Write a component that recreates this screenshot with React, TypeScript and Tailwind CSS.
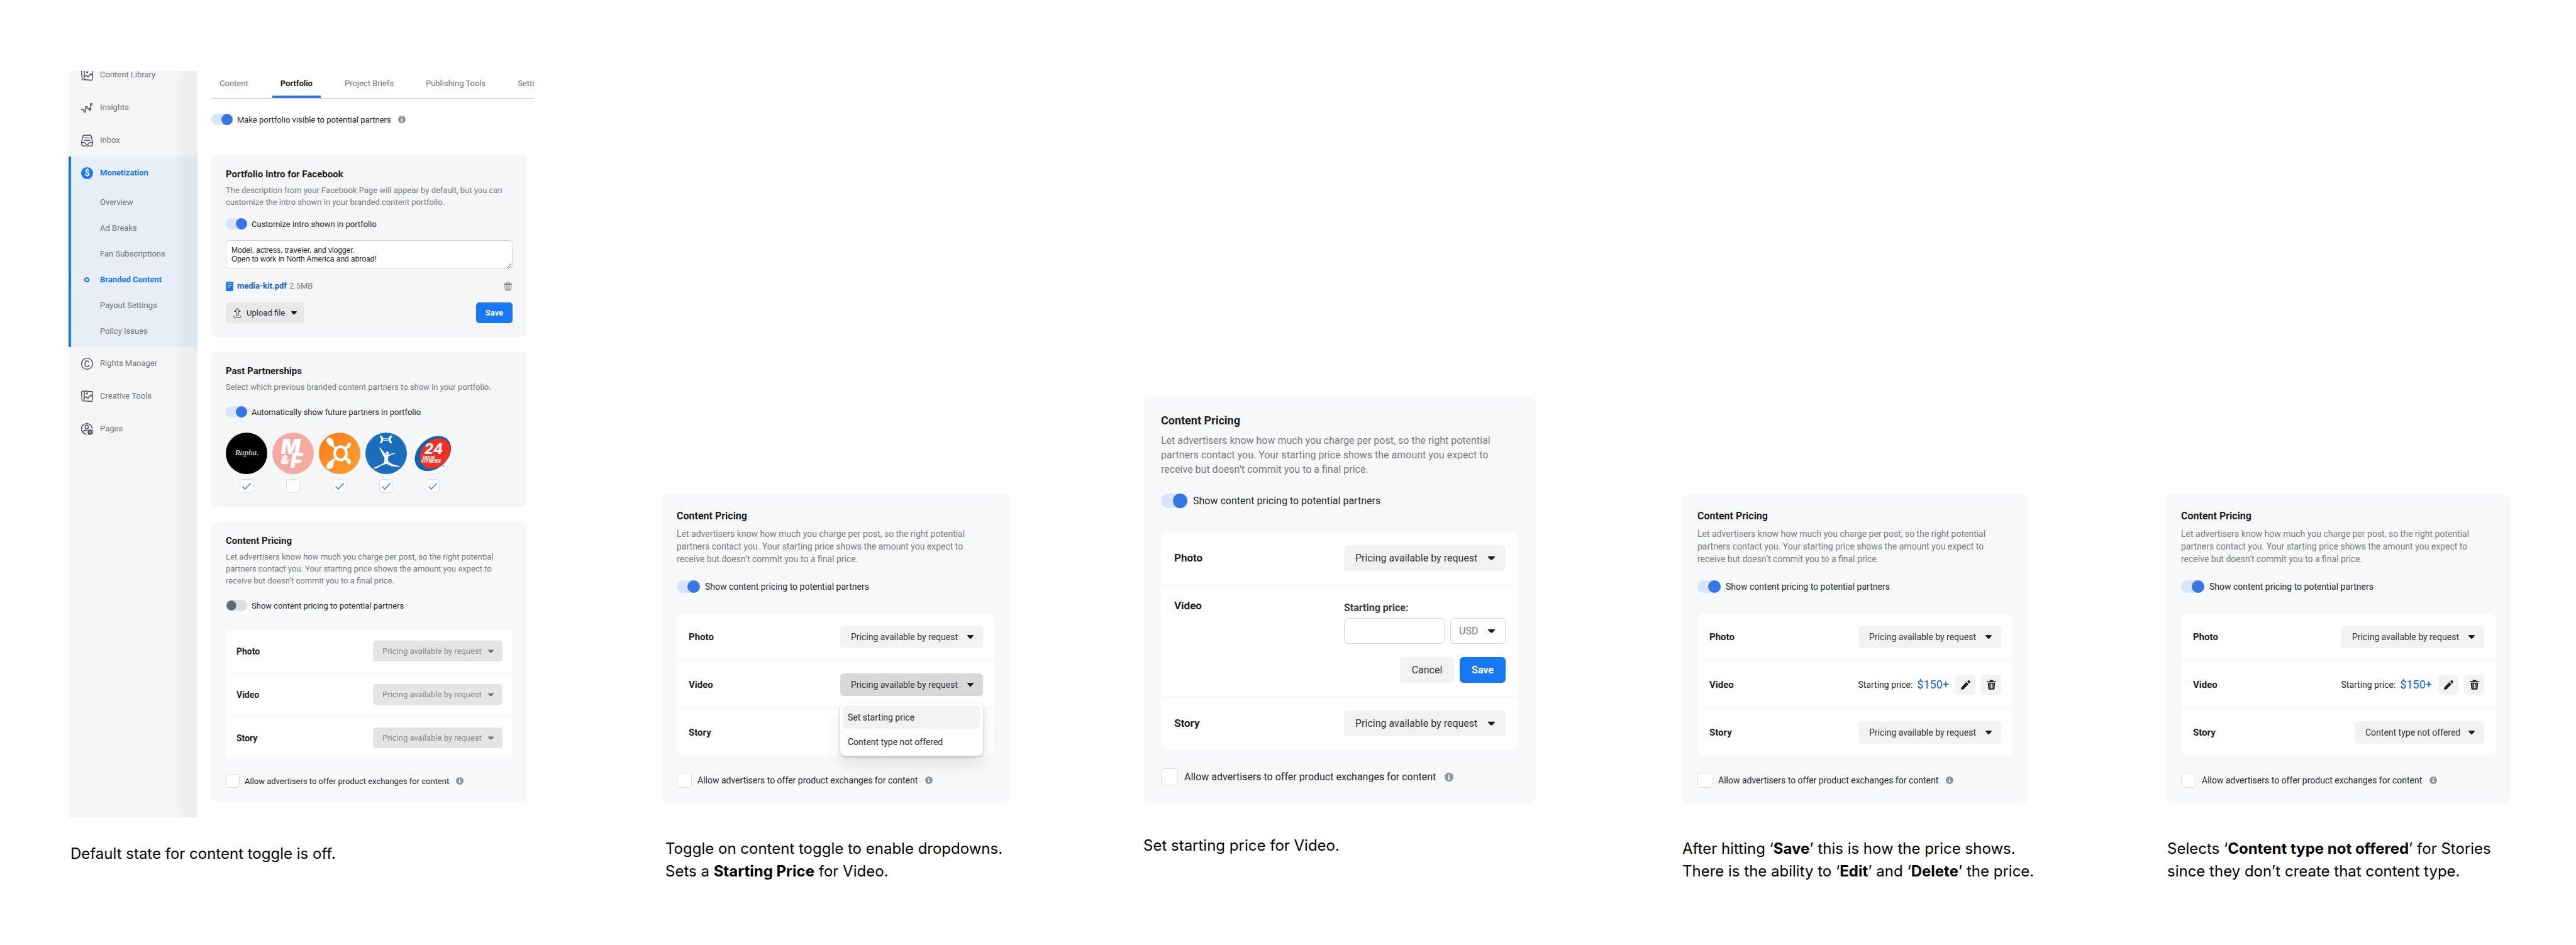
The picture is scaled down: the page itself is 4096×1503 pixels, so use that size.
import React, { useId } from "react";

type Size = "sm" | "md" | "lg";

const scale = {
  sm: {
    card: "px-[23px] pt-[21px] pb-[22px] rounded-lg",
    heading: "text-[15px] leading-5",
    body: "text-[13px]",
    desc: "text-[13px] leading-[19px] mt-1.5",
    toggleRow: "mt-[21px] gap-[7px]",
    track: "w-[34px] h-[18px] before:size-[18px]",
    list: "mt-[30px]",
    row: "min-h-[67px] pl-[17px] pr-4",
    label: "text-sm",
    control: "h-[33px] rounded-[5px] text-[13px] pl-[15px] pr-8",
    controlWidth: "w-[206px]",
    caret: "right-3.5 w-[9px]",
    checkRow: "mt-6 gap-2",
    check: "size-[22px] rounded-[5px]",
    info: "size-3 ml-[3px]",
  },
  md: {
    card: "px-6 pt-[23px] pb-6 rounded-lg",
    heading: "text-base leading-[22px]",
    body: "text-sm",
    desc: "text-sm leading-5 mt-[7px]",
    toggleRow: "mt-6 gap-2",
    track: "w-[37px] h-5 before:size-5",
    list: "mt-[33px]",
    row: "min-h-[74px] pl-[19px] pr-[18px]",
    label: "text-[15px]",
    control: "h-9 rounded-md text-sm pl-[17px] pr-9",
    controlWidth: "w-[227px]",
    caret: "right-[15px] w-2.5",
    checkRow: "mt-[27px] gap-[9px]",
    check: "size-6 rounded-md",
    info: "size-3 ml-[3px]",
  },
  lg: {
    card: "px-7 pt-[26px] pb-7 rounded-[9px]",
    heading: "text-lg leading-6",
    body: "text-base",
    desc: "text-base leading-[23px] mt-2",
    toggleRow: "mt-[27px] gap-[9px]",
    track: "w-[42px] h-[23px] before:size-[23px]",
    list: "mt-[38px]",
    row: "min-h-[83px] pl-[21px] pr-5",
    label: "text-[17px]",
    control: "h-[41px] rounded-md text-base pl-[18px] pr-10",
    controlWidth: "w-[257px]",
    caret: "right-[17px] w-[11px]",
    checkRow: "mt-[30px] gap-2.5",
    check: "size-[27px] rounded-md",
    info: "size-3.5 ml-1",
  },
};

/* ---------- icons ---------- */

function Caret({ className = "" }: { className?: string }) {
  return (
    <svg viewBox="0 0 13 8" className={className} fill="currentColor" aria-hidden="true">
      <path d="M1.4 0h10.2c1.3 0 1.8 1.300.9 2.200L8 7.100c-.9.9-2.100.9-3 0L.5 2.200C-.4 1.300.1 0 1.400 0z" />
    </svg>
  );
}

function Info({ className = "" }: { className?: string }) {
  return (
    <svg viewBox="0 0 18 18" className={className} role="img" aria-label="More information">
      <circle cx="9" cy="9" r="9" fill="#8d949e" />
      <circle cx="9" cy="4.900" r="1.500" fill="#fff" />
      <path d="M6.800 7.500h3.400v4.700h1.200v1.800H6.600v-1.800h1.200V9.300h-1z" fill="#fff" />
    </svg>
  );
}

function NavSvg({ children }: { children: React.ReactNode }) {
  return (
    <svg
      viewBox="0 0 28 28"
      className="size-[19px]"
      fill="none"
      stroke="#444950"
      strokeWidth="2"
      strokeLinecap="round"
      strokeLinejoin="round"
      aria-hidden="true"
    >
      {children}
    </svg>
  );
}

const PicturesIcon = () => (
  <NavSvg>
    <path d="M9.700 1.500l15.500 1.100c1.300.1 2 .9 1.900 2.100L26 24c-.1 1.300-.9 1.900-2.100 1.800L8.600 24.700c-1.200-.1-1.900-.9-1.800-2.100l.9-19.200c.1-1.200.9-2 2-1.900z" />
    <path d="M5.500 1.500L2.500 2C1.400 2.200.8 2.900.9 4l1.300 18.500c.1 1.600.8 2.700 2.500 3.100" />
    <path d="M7.500 18l3.700-4 3 2.700 1.300 2 7-8 3.800 4" />
    <circle cx="14" cy="7" r="1.300" fill="#444950" />
  </NavSvg>
);

const InsightsIcon = () => (
  <NavSvg>
    <path d="M.8 18.600c2-2 3.700-2 5.700 1.600M9.200 19.800l2.200-4.900M14.500 14l4.200 2.300M21.600 15l1.600-7" />
    <circle cx="8.300" cy="22" r="2.200" />
    <circle cx="12.300" cy="12.700" r="2.200" />
    <circle cx="21" cy="17.300" r="2.200" />
    <circle cx="23.700" cy="5.700" r="2.200" />
  </NavSvg>
);

const InboxIcon = () => (
  <NavSvg>
    <path d="M7.500 1.500h13c1.700 0 2.700.7 3.100 2.300L27 18v4c0 3-1.700 4.800-4.700 4.800H5.700C2.700 26.800 1 25 1 22v-4L4.400 3.800C4.800 2.200 5.800 1.500 7.500 1.500z" />
    <path d="M8 8h12M7 13.500h14M1.200 18.500h6c1.300 0 1.800.6 2.300 1.800.8 1.800 2.300 2.900 4.500 2.900s3.700-1.100 4.500-2.900c.5-1.200 1-1.800 2.300-1.800h6" />
  </NavSvg>
);

const RightsIcon = () => (
  <NavSvg>
    <circle cx="14" cy="14" r="13" />
    <path d="M18.300 10.500C17.500 8.500 16 7.300 14 7.300c-3.100 0-5 2.600-5 6.700s1.900 6.700 5 6.700c2 0 3.500-1.200 4.300-3.200" />
  </NavSvg>
);

const PagesIcon = () => (
  <NavSvg>
    <path d="M12.500 25.900A12.500 12.500 0 1 1 25.600 12" />
    <ellipse cx="13" cy="9.200" rx="3.900" ry="4.500" />
    <path d="M13.500 17H10c-3 0-5 1.800-5 4.600" />
    <circle cx="21.300" cy="21" r="3.400" strokeWidth="3" />
    <path d="M21.300 14.500v2M21.300 25.500v2M14.800 21h2M25.800 21h2M16.700 16.400l1.400 1.400M24.500 24.200l1.400 1.400M16.700 25.600l1.400-1.400M24.500 17.800l1.400-1.400" strokeWidth="2.400" />
  </NavSvg>
);

const MoneyIcon = () => (
  <span className="flex size-[19px] items-center justify-center rounded-full bg-[#1877f2] text-sm leading-none font-bold text-white" aria-hidden="true">
    $
  </span>
);

const PencilIcon = () => (
  <svg viewBox="0 0 22 22" className="size-[15px]" fill="#1c1e21" aria-hidden="true">
    <path d="M.3 20.500l.6-3.700c.1-.5.2-.8.6-1.200L13 4.200 17.800 9 6.400 20.500c-.4.4-.7.500-1.200.6l-3.700.7c-.8.100-1.300-.4-1.200-1.300zM14.600 2.700L16.700.7c1-.9 2.100-.9 3 0l1.600 1.600c.9.9.9 2 0 3l-2 2.100z" />
  </svg>
);

const TrashSolidIcon = () => (
  <svg viewBox="0 0 22 24" className="h-4 w-[15px]" aria-hidden="true">
    <path d="M1 3.400h5.200C6.800 1.300 8.500.4 11 .4s4.200.9 4.800 3H21c1.300 0 1.300 2.200 0 2.200H1c-1.300 0-1.300-2.200 0-2.200z" fill="#1c1e21" />
    <path d="M2.200 7.200h17.600l-1.500 14.300c-.2 1.600-1 2.300-2.500 2.300H6.200c-1.500 0-2.300-.7-2.500-2.300z" fill="#1c1e21" />
    <path d="M7.100 10l.6 10.500M11 10v10.500M14.900 10l-.6 10.500" stroke="#f2f2f2" strokeWidth="1.500" strokeLinecap="round" />
  </svg>
);

const TrashOutlineIcon = () => (
  <svg viewBox="0 0 21 23" className="h-[15px] w-3.5" fill="none" stroke="#6b6e73" strokeWidth="1.400" strokeLinecap="round" aria-hidden="true">
    <path d="M1 4.500h19M6.500 4c.3-2 1.500-3 4-3s3.700 1 4 3" />
    <path d="M2.500 7h16l-1.300 13.500c-.1 1-.8 1.600-1.700 1.600h-10c-.9 0-1.600-.6-1.700-1.600z" />
    <path d="M7 9.500l.5 10M10.500 9.500v10M14 9.500l-.5 10" />
  </svg>
);

const DocIcon = () => (
  <svg viewBox="0 0 17 22" className="h-[15px] w-3" aria-hidden="true">
    <rect width="17" height="22" rx="2" fill="#1877f2" />
    <path d="M4 5h9.500M4 9h9.500M4 13h6" stroke="#fff" strokeWidth="1.300" />
  </svg>
);

const UploadIcon = () => (
  <svg viewBox="0 0 18 22" className="h-[15px] w-[13px]" fill="none" stroke="#3a3c40" strokeWidth="1.500" strokeLinecap="round" strokeLinejoin="round" aria-hidden="true">
    <path d="M9 1l6.500 7H12l-1 9.500H7L6 8H2.500z" />
    <path d="M.8 18.500v1.300c0 .9.500 1.400 1.400 1.400h13.600c.9 0 1.400-.5 1.400-1.400v-1.300" />
  </svg>
);

/* ---------- partner logos ---------- */

const RaphaLogo = () => (
  <svg viewBox="0 0 100 100" className="size-full">
    <circle cx="50" cy="50" r="50" fill="#000" />
    <text x="51" y="55" textAnchor="middle" fill="#fff" fontFamily="Liberation Serif, serif" fontStyle="italic" fontSize="20">Rapha.</text>
  </svg>
);

const MFLogo = () => (
  <svg viewBox="0 0 100 100" className="size-full">
    <circle cx="50" cy="50" r="50" fill="#f2aaa3" />
    <g fill="#fff" fontFamily="Inter, sans-serif" fontStyle="italic" fontWeight="900">
      <text x="21" y="52" fontSize="49">M</text>
      <text x="20" y="76" fontSize="29">&amp;</text>
      <text x="43" y="85" fontSize="50">F</text>
    </g>
  </svg>
);

const OrangeLogo = () => (
  <svg viewBox="0 0 100 100" className="size-full">
    <defs>
      <linearGradient id="orange-fill" x1="0" y1="0" x2="1" y2="1">
        <stop offset="0" stopColor="#f97a14" />
        <stop offset="1" stopColor="#fda035" />
      </linearGradient>
    </defs>
    <circle cx="50" cy="50" r="50" fill="url(#orange-fill)" />
    <g fill="#fff">
      <path d="M19 15c4-5 12-3 15 3 3 5 1 9 3 13 1 3 4 4 6 5l-4 5c-2-3-4-5-7-7-3-1-6-2-9-6-4-5-7-9-4-13z" />
      <path d="M19 86c4 4 12 2 15-4 3-5 1-9 3-13 1-3 4-4 6-5l-4-5c-2 3-4 5-7 7-3 1-6 2-9 6-4 5-7 10-4 14z" />
      <path d="M62 33c4 1 5-1 6-4 1-4 4-6 7-5 4 2 3 9-1 12-3 2-6 1-6 6z" />
      <path d="M62 67c4-1 5 1 6 4 1 4 4 6 7 5 4-2 3-9-1-12-3-2-6-1-6-6z" />
    </g>
    <ellipse cx="52.300" cy="50" rx="14.300" ry="16" fill="none" stroke="#fff" strokeWidth="6.500" />
  </svg>
);

const RunnerLogo = () => (
  <svg viewBox="0 0 100 100" className="size-full">
    <circle cx="50" cy="50" r="50" fill="#1a6fbc" />
    <g fill="none" stroke="#fff" strokeLinecap="round">
      <path d="M37.500 9.500c4 3.500 4 10.500 0 14M61.500 9.500c-4 3.500-4 10.500 0 14" strokeWidth="5" />
      <ellipse cx="49.500" cy="16.500" rx="8" ry="2.200" strokeWidth="1.600" />
    </g>
    <circle cx="53" cy="49" r="3.400" fill="#fff" />
    <path
      d="M33.500 36.500l2-.5 12 14.500 3 2h6l16-4.500.5 1.500-13 5-5 3.500-.5 8 2 5 10 5.500 17 5.500-1 1.500-19-2.500-13.500-5.500-12.500 4.500-9 5.500-8 1-3.500 1 1-2 9-3.500 10-4.500 8.500-5.500.5-8-1.500-6.500-3-4z"
      fill="#fff"
    />
  </svg>
);

const FitnessLogo = () => (
  <svg viewBox="0 0 100 100" className="size-full">
    <circle cx="50" cy="50" r="49.500" fill="#fff" stroke="#dddfe2" />
    <ellipse cx="50.500" cy="50.500" rx="49" ry="36" transform="rotate(-42 50.500 50.500)" fill="#0067b1" />
    <ellipse cx="56" cy="50" rx="41.500" ry="32" transform="rotate(-42 56 50)" fill="#ee3124" />
    <g fill="#fff" fontFamily="Inter, sans-serif" fontStyle="italic" fontWeight="800">
      <text x="30" y="52" fontSize="34">24</text>
      <text x="26" y="63" fontSize="10">HOUR</text>
      <text x="23" y="73" fontSize="11">FITNESS</text>
    </g>
    <circle cx="76" cy="81" r="1.800" fill="none" stroke="#0067b1" strokeWidth="0.900" />
  </svg>
);

/* ---------- controls ---------- */

function Toggle({ label, on = true, size = "sm", gap, info }: { label: string; on?: boolean; size?: Size; gap?: string; info?: boolean }) {
  const s = scale[size];
  const id = useId();
  return (
    <div className={`flex items-center text-[#26282b] ${s.body} ${gap ?? s.toggleRow}`}>
      <input
        id={id}
        type="checkbox"
        role="switch"
        defaultChecked={on}
        className={`shrink-0 appearance-none rounded-full bg-[#dcdee0] before:block before:scale-[0.85] before:rounded-full before:bg-[#606770] checked:bg-[#d8e5fa] checked:before:ml-auto checked:before:scale-100 checked:before:bg-[#3578e5] ${s.track}`}
      />
      <label htmlFor={id} className="leading-none">{label}</label>
      {info && <Info className="ml-1 size-3" />}
    </div>
  );
}

function Checkbox({ id, label, checked = false, className }: { id?: string; label?: string; checked?: boolean; className: string }) {
  return (
    <span className="grid shrink-0 place-items-center">
      <input
        id={id}
        type="checkbox"
        aria-label={label}
        defaultChecked={checked}
        className={`peer appearance-none border border-[#dadde1] bg-white [grid-area:1/1] ${className}`}
      />
      <svg
        viewBox="0 0 14 11"
        className="pointer-events-none hidden w-3.5 [grid-area:1/1] peer-checked:block"
        fill="none"
        stroke="#3b7df0"
        strokeWidth="1.500"
        strokeLinecap="round"
        strokeLinejoin="round"
        aria-hidden="true"
      >
        <path d="M1 6l3.800 4L13 1" />
      </svg>
    </span>
  );
}

function Dropdown({ label, value, size, disabled, width }: { label: string; value: string; size: Size; disabled?: boolean; width?: string }) {
  const s = scale[size];
  return (
    <div className="relative">
      <select
        aria-label={label}
        disabled={disabled}
        defaultValue={value}
        className={`block appearance-none bg-[#f2f2f2] text-[#333538] disabled:bg-[#e4e4e4] disabled:text-[#8a8c8e] disabled:opacity-100 ${s.control} ${width ?? s.controlWidth}`}
      >
        <option>{value}</option>
      </select>
      <Caret className={`pointer-events-none absolute top-1/2 -translate-y-1/2 ${s.caret} ${disabled ? "text-[#75777a]" : "text-[#1c1e21]"}`} />
    </div>
  );
}

function OpenDropdown() {
  const s = scale.md;
  return (
    <div className="relative">
      <button type="button" aria-haspopup="listbox" aria-expanded="true" className={`block bg-[#d8d8d8] text-left text-[#333538] ${s.control} ${s.controlWidth}`}>
        Pricing available by request
      </button>
      <Caret className={`pointer-events-none absolute top-1/2 -translate-y-1/2 text-[#1c1e21] ${s.caret}`} />
      <ul
        role="listbox"
        aria-label="Video pricing"
        className="absolute top-full right-0 left-0 z-10 mt-[11px] flex flex-col gap-0.5 rounded-lg bg-white p-1 text-sm text-[#26282b] shadow-[0_12px_28px_rgba(0,0,0,0.1),0_2px_4px_rgba(0,0,0,0.2)]"
      >
        <li role="option" aria-selected="true" className="flex h-[37px] items-center rounded-md bg-[#f2f2f2] px-2">Set starting price</li>
        <li role="option" aria-selected="false" className="flex h-[37px] items-center rounded-md px-2">Content type not offered</li>
      </ul>
    </div>
  );
}

function PriceForm() {
  const s = scale.lg;
  const id = useId();
  return (
    <form className="flex w-[257px] flex-col pt-[5px] text-base" onSubmit={(e) => e.preventDefault()}>
      <label htmlFor={id} className="leading-5 font-bold text-[#3c3e42]">Starting price:</label>
      <div className="mt-1.5 flex gap-[9px]">
        <input id={id} type="text" className="h-[41px] min-w-0 flex-1 rounded-md border border-[#d5d7da] bg-white px-3" />
        <div className="relative">
          <select aria-label="Currency" className="block h-[41px] w-[88px] appearance-none rounded-md border border-[#d5d7da] bg-white pl-[13px] text-[#777a7d]">
            <option>USD</option>
          </select>
          <Caret className={`pointer-events-none absolute top-1/2 -translate-y-1/2 text-[#1c1e21] ${s.caret}`} />
        </div>
      </div>
      <div className="mt-[21px] flex justify-end gap-[9px]">
        <button type="button" className="h-[41px] w-[86px] rounded-md bg-[#f2f2f2] text-[#333538]">Cancel</button>
        <button type="submit" className="h-[41px] w-[73px] rounded-md bg-[#1877f2] font-bold text-white">Save</button>
      </div>
    </form>
  );
}

function SavedPrice() {
  return (
    <div className="flex items-center text-sm text-[#26282b]">
      <span>Starting price:</span>
      <span className="ml-[7px] text-lg text-[#1763cf]">$150+</span>
      <button type="button" aria-label="Edit price" className="ml-2.5 grid size-8 place-items-center rounded-md bg-[#f2f2f2]">
        <PencilIcon />
      </button>
      <button type="button" aria-label="Delete price" className="ml-[9px] grid size-8 place-items-center rounded-md bg-[#f2f2f2]">
        <TrashSolidIcon />
      </button>
    </div>
  );
}

/* ---------- pricing card ---------- */

function PricingRow({ name, size, top, children }: { name: string; size: Size; top?: boolean; children: React.ReactNode }) {
  const s = scale[size];
  return (
    <li className={`flex justify-between bg-white first:rounded-t-lg last:rounded-b-lg ${top ? "items-start py-[21px]" : "items-center"} ${s.row}`}>
      <span className={`font-bold text-[#1c1e21] ${s.label} ${top ? "leading-[22px]" : ""}`}>{name}</span>
      {children}
    </li>
  );
}

function PricingCard({
  size,
  on = true,
  video,
  story = "Pricing available by request",
  storyWidth,
}: {
  size: Size;
  on?: boolean;
  video?: "menu" | "form" | "saved";
  story?: string;
  storyWidth?: string;
}) {
  const s = scale[size];
  const id = useId();
  const request = "Pricing available by request";
  return (
    <section className={`bg-[#f7f8fa] ${s.card}`}>
      <h2 className={`font-bold text-[#1c1e21] ${s.heading}`}>Content Pricing</h2>
      <p className={`text-[#777a7d] ${s.desc}`}>
        Let advertisers know how much you charge per post, so the right potential
        <br />
        partners contact you. Your starting price shows the amount you expect to
        <br />
        receive but doesn’t commit you to a final price.
      </p>
      <Toggle label="Show content pricing to potential partners" on={on} size={size} />
      <ul className={`flex flex-col gap-0.5 ${s.list}`}>
        <PricingRow name="Photo" size={size}>
          <Dropdown label="Photo pricing" value={request} size={size} disabled={!on} />
        </PricingRow>
        <PricingRow name="Video" size={size} top={video === "form"}>
          {video === "menu" && <OpenDropdown />}
          {video === "form" && <PriceForm />}
          {video === "saved" && <SavedPrice />}
          {!video && <Dropdown label="Video pricing" value={request} size={size} disabled={!on} />}
        </PricingRow>
        <PricingRow name="Story" size={size}>
          <Dropdown label="Story pricing" value={story} size={size} disabled={!on} width={storyWidth} />
        </PricingRow>
      </ul>
      <div className={`flex items-center text-[#26282b] ${s.body} ${s.checkRow}`}>
        <Checkbox id={id} className={s.check} />
        <label htmlFor={id} className="leading-none">Allow advertisers to offer product exchanges for content</label>
        <Info className={s.info} />
      </div>
    </section>
  );
}

/* ---------- full page view ---------- */

function NavItem({ icon, label, active }: { icon: React.ReactNode; label: string; active?: boolean }) {
  return (
    <a href="#" className={`flex h-[52px] items-center gap-[11px] ${active ? "pl-4 font-bold text-[#1877f2]" : "pl-5 text-[#707376]"}`}>
      {icon}
      {label}
    </a>
  );
}

function Sidebar() {
  const sub = ["Overview", "Ad Breaks", "Fan Subscriptions", "Branded Content", "Payout Settings", "Policy Issues"];
  return (
    <aside className="relative w-[205px] shrink-0 overflow-hidden bg-[#f5f6f7] text-[13px]">
      <nav className="-mt-5">
        <NavItem icon={<PicturesIcon />} label="Content Library" />
        <NavItem icon={<InsightsIcon />} label="Insights" />
        <NavItem icon={<InboxIcon />} label="Inbox" />
        <div className="border-l-4 border-[#1877f2] bg-[#e7eef7] pb-[5px]">
          <NavItem icon={<MoneyIcon />} label="Monetization" active />
          {sub.map((name) => {
            const current = name === "Branded Content";
            return (
              <a key={name} href="#" className={`flex h-[41px] items-center pl-[21px] ${current ? "font-bold text-[#1877f2]" : "text-[#707376]"}`}>
                <span className={`mr-[17px] size-2 rounded-full ${current ? "border-2 border-[#1877f2]" : ""}`} />
                {name}
              </a>
            );
          })}
        </div>
        <NavItem icon={<RightsIcon />} label="Rights Manager" />
        <NavItem icon={<PicturesIcon />} label="Creative Tools" />
        <NavItem icon={<PagesIcon />} label="Pages" />
      </nav>
      <div className="pointer-events-none absolute inset-y-0 right-0 w-9 bg-linear-to-r from-transparent via-black/[0.035] to-black/[0.04]" />
    </aside>
  );
}

function Tabs() {
  const tabs = ["Content", "Portfolio", "Project Briefs", "Publishing Tools", "Settings"];
  return (
    <nav className="flex h-11 gap-[25px] overflow-hidden border-b border-[#ccd0d5] text-[13px] whitespace-nowrap">
      {tabs.map((tab) => (
        <a
          key={tab}
          href="#"
          className={`flex h-[43px] shrink-0 items-center border-b-4 px-[13px] ${
            tab === "Portfolio" ? "border-[#3578e5] font-bold text-[#1c1e21]" : "border-transparent text-[#6b6f76]"
          }`}
        >
          {tab}
        </a>
      ))}
    </nav>
  );
}

function IntroCard() {
  const s = scale.sm;
  return (
    <section className={`mt-[47px] mr-3 bg-[#f5f6f7] ${s.card}`}>
      <h2 className={`font-bold text-[#1c1e21] ${s.heading}`}>Portfolio Intro for Facebook</h2>
      <p className={`text-[#777a7d] ${s.desc}`}>
        The description from your Facebook Page will appear by default, but you can
        <br />
        customize the intro shown in your branded content portfolio.
      </p>
      <Toggle label="Customize intro shown in portfolio" gap="mt-4 gap-[7px]" />
      <textarea
        aria-label="Portfolio intro"
        className="mt-[17px] block h-[46px] w-full overflow-hidden rounded-[5px] border border-[#d5d7da] bg-white px-2 pt-2 font-['Liberation_Sans',Arial,sans-serif] text-xs leading-[14px] text-[#1c1e21]"
        defaultValue={"Model, actress, traveler, and vlogger.\nOpen to work in North America and abroad!"}
      />
      <div className="mt-[18px] flex h-[18px] items-center text-[13px]">
        <DocIcon />
        <a href="#" className="ml-1.5 font-bold text-[#1763cf]">media-kit.pdf</a>
        <span className="ml-1 text-[#777a7d]">2.5MB</span>
        <button type="button" aria-label="Delete file" className="ml-auto">
          <TrashOutlineIcon />
        </button>
      </div>
      <div className="mt-[17px] flex justify-between text-[13px]">
        <button type="button" className="flex h-[33px] items-center rounded-[5px] bg-[#e7e8ea] px-3 text-[#333538]">
          <UploadIcon />
          <span className="ml-2">Upload file</span>
          <Caret className="ml-2.5 w-[9px] text-[#1c1e21]" />
        </button>
        <button type="button" className="h-[33px] w-[58px] rounded-[5px] bg-[#1877f2] font-bold text-white">Save</button>
      </div>
    </section>
  );
}

function PartnersCard() {
  const s = scale.sm;
  const partners = [
    { name: "Rapha", logo: <RaphaLogo />, shown: true },
    { name: "M&F", logo: <MFLogo />, shown: false },
    { name: "Orangetheory", logo: <OrangeLogo />, shown: true },
    { name: "Under Armour", logo: <RunnerLogo />, shown: true },
    { name: "24 Hour Fitness", logo: <FitnessLogo />, shown: true },
  ];
  return (
    <section className={`mt-[23px] mr-3 bg-[#f5f6f7] ${s.card}`}>
      <h2 className={`font-bold text-[#1c1e21] ${s.heading}`}>Past Partnerships</h2>
      <p className={`text-[#777a7d] ${s.desc}`}>Select which previous branded content partners to show in your portfolio.</p>
      <Toggle label="Automatically show future partners in portfolio" />
      <div className="mt-6 flex gap-2">
        {partners.map((p) => (
          <div key={p.name} className="flex flex-col items-center gap-2">
            <div className="size-[66px]">{p.logo}</div>
            <Checkbox label={`Show ${p.name}`} checked={p.shown} className="size-[22px] rounded-[5px]" />
          </div>
        ))}
      </div>
    </section>
  );
}

function PageView() {
  return (
    <div className="flex overflow-hidden">
      <Sidebar />
      <main className="min-w-0 flex-1 pb-[25px] pl-[22px]">
        <Tabs />
        <Toggle label="Make portfolio visible to potential partners" gap="mt-6 gap-[7px]" info />
        <IntroCard />
        <PartnersCard />
        <div className="mt-[23px] mr-3">
          <PricingCard size="sm" on={false} />
        </div>
      </main>
    </div>
  );
}

/* ---------- board ---------- */

function Step({ children, caption, gutter, captionClass }: { children: React.ReactNode; caption: React.ReactNode; gutter: string; captionClass: string }) {
  return (
    <figure className="min-w-0">
      <div className={gutter}>{children}</div>
      <figcaption className={`font-[Inter,sans-serif] text-2xl leading-9 whitespace-nowrap text-black [font-optical-sizing:none] ${captionClass}`}>{caption}</figcaption>
    </figure>
  );
}

export default function App() {
  return (
    <div className="grid min-h-screen grid-cols-[minmax(0,943fr)_minmax(0,766fr)_minmax(0,857fr)_minmax(0,769fr)_minmax(0,548fr)] items-end bg-white pt-[113px] pr-[104px] pb-[99px] pl-[109px] font-[Roboto,sans-serif]">
      <Step gutter="pr-[202px]" captionClass="h-[104px] pt-10 pl-[3px]" caption="Default state for content toggle is off.">
        <PageView />
      </Step>
      <Step
        gutter="pr-[213px]"
        captionClass="h-[127px] pt-[55px] pl-1.5"
        caption={
          <>
            Toggle on content toggle to enable dropdowns.
            <br />
            Sets a <strong>Starting Price</strong> for Video.
          </>
        }
      >
        <PricingCard size="md" video="menu" />
      </Step>
      <Step gutter="pr-[233px]" captionClass="h-[127px] pt-[50px]" caption="Set starting price for Video.">
        <PricingCard size="lg" video="form" />
      </Step>
      <Step
        gutter="pr-[220px]"
        captionClass="h-[127px] pt-[55px]"
        caption={
          <>
            After hitting ‘<strong>Save</strong>’ this is how the price shows.
            <br />
            There is the ability to ‘<strong>Edit</strong>’ and ‘<strong>Delete</strong>’ the price.
          </>
        }
      >
        <PricingCard size="md" video="saved" />
      </Step>
      <Step
        gutter=""
        captionClass="h-[127px] pt-[55px] pl-0.5"
        caption={
          <>
            Selects ‘<strong>Content type not offered</strong>’ for Stories
            <br />
            since they don’t create that content type.
          </>
        }
      >
        <PricingCard size="md" video="saved" story="Content type not offered" storyWidth="w-[206px]" />
      </Step>
    </div>
  );
}
